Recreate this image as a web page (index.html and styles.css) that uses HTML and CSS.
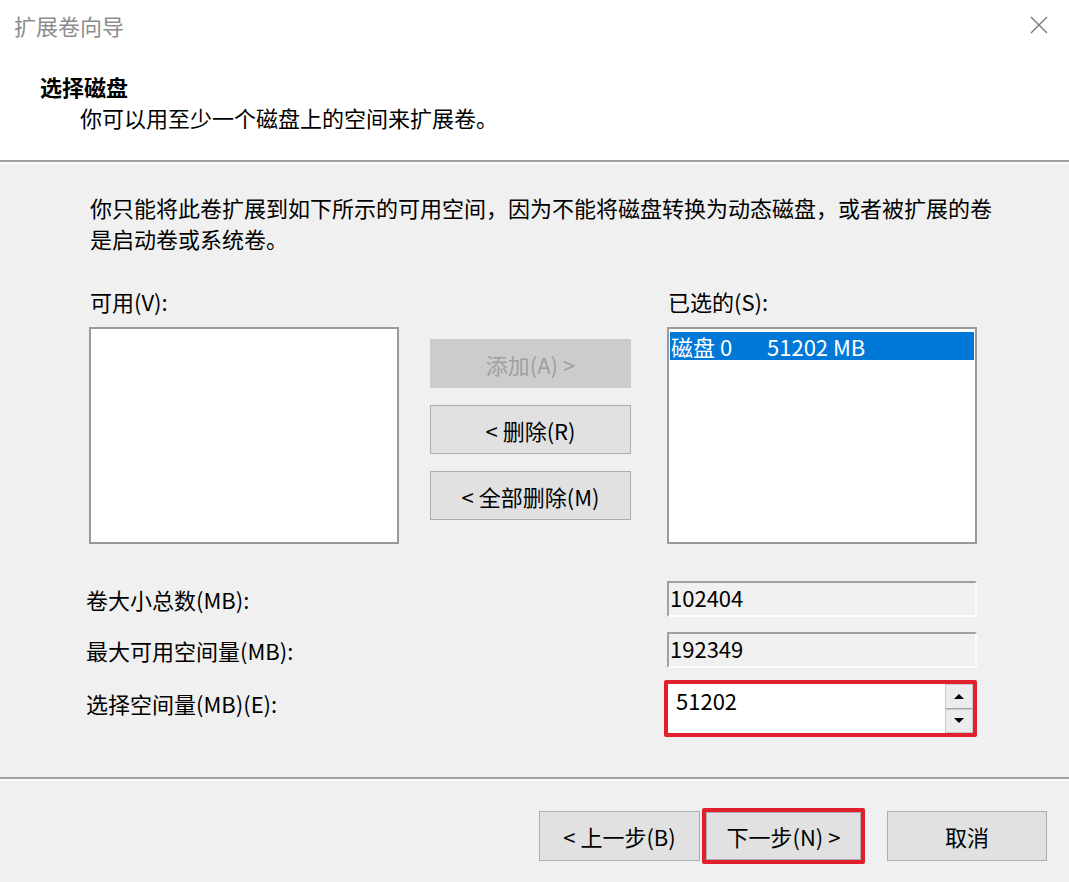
FILE: index.html
```html
<!DOCTYPE html>
<html lang="zh-CN">
<head>
  <meta charset="UTF-8" />
  <title>扩展卷向导</title>
  <link rel="stylesheet" href="styles.css">
</head>
<body>
  <div class="wizard">

    <div class="titlebar">
      <span class="title-text">扩展卷向导</span>
      <svg class="close" width="18" height="18" viewBox="0 0 18 18">
        <path d="M1 1 L17 17 M17 1 L1 17" stroke="#777" stroke-width="1.3" fill="none"/>
      </svg>
    </div>

    <div class="header">
      <div class="header-title">选择磁盘</div>
      <div class="header-sub">你可以用至少一个磁盘上的空间来扩展卷。</div>
    </div>

    <div class="etched"></div>

    <div class="main">
      <p class="intro">你只能将此卷扩展到如下所示的可用空间，因为不能将磁盘转换为动态磁盘，或者被扩展的卷是启动卷或系统卷。</p>

      <div class="lists">
        <div class="list-col">
          <div class="label">可用(V):</div>
          <div class="listbox"></div>
        </div>

        <div class="move-buttons">
          <button class="btn disabled">添加(A) &gt;</button>
          <button class="btn">&lt; 删除(R)</button>
          <button class="btn">&lt; 全部删除(M)</button>
        </div>

        <div class="list-col">
          <div class="label">已选的(S):</div>
          <div class="listbox">
            <div class="item selected"><span class="disk">磁盘 0</span>51202 MB</div>
          </div>
        </div>
      </div>

      <div class="field-row first">
        <div class="field-label">卷大小总数(MB):</div>
        <div class="readonly">102404</div>
      </div>
      <div class="field-row">
        <div class="field-label">最大可用空间量(MB):</div>
        <div class="readonly">192349</div>
      </div>
      <div class="field-row spin-row">
        <div class="field-label">选择空间量(MB)(E):</div>
        <div class="highlight spin-wrap">
          <div class="spin">
            <span class="spin-value">51202</span>
            <div class="spin-arrows">
              <div class="arrow up"><span></span></div>
              <div class="arrow down"><span></span></div>
            </div>
          </div>
        </div>
      </div>
    </div>

    <div class="etched"></div>

    <div class="footer">
      <button class="btn nav">&lt; 上一步(B)</button>
      <div class="highlight next-wrap">
        <button class="btn nav inner">下一步(N) &gt;</button>
      </div>
      <button class="btn nav cancel">取消</button>
    </div>

  </div>
</body>
</html>
```

FILE: styles.css
```css
* {
  box-sizing: border-box;
  margin: 0;
  padding: 0;
}

body {
  font-family: "Noto Sans CJK SC", "Noto Sans", sans-serif;
  font-size: 22px;
  color: #000;
  background-color: #f0f0f0;
  width: 1069px;
  height: 882px;
  overflow: hidden;
}

.wizard {
  width: 1069px;
  height: 882px;
}

/* title bar + header */
.titlebar {
  height: 50px;
  background: white;
  display: flex;
  align-items: center;
  justify-content: space-between;
  padding: 0 21px 0 14px;
}

.title-text {
  color: #8c8c8c;
  line-height: 31px;
}

.close {
  display: block;
}

.header {
  background: white;
  padding: 21px 0 27px 40px;
  height: 110px;
}

.header-title {
  font-weight: 700;
  line-height: 31px;
}

.header-sub {
  line-height: 31px;
  padding-left: 40px;
}

.etched {
  height: 4px;
  border-top: 2px solid #a0a0a0;
  border-bottom: 2px solid #fcfcfc;
}

/* main area */
.main {
  height: 613px;
  padding: 28px 0 0 89px;
}

.intro {
  width: 912px;
  padding-left: 1px;
  line-height: 31px;
}

.lists {
  display: flex;
  margin-top: 32px;
}

.list-col {
  width: 310px;
}

.label {
  line-height: 31px;
  padding-left: 1px;
  margin-bottom: 10px;
}

.listbox {
  height: 217px;
  background: white;
  border: 2px solid #9a9a9e;
  padding: 3px 1px;
}

.item {
  height: 28px;
  line-height: 28px;
  padding-left: 1px;
  white-space: nowrap;
}

.item.selected {
  background: #0078d7;
  color: white;
}

.item .disk {
  display: inline-block;
  width: 96px;
}

.move-buttons {
  width: 201px;
  margin: 53px 36px 0 31px;
  display: flex;
  flex-direction: column;
  gap: 17px;
}

.btn {
  font-family: inherit;
  font-size: 22px;
  color: #000;
  background: #e1e1e1;
  border: 1px solid #adadad;
  height: 49px;
  width: 100%;
  cursor: pointer;
}

.btn.disabled {
  background: #cccccc;
  border-color: #cccccc;
  color: #a0a0a0;
}

/* value rows */
.field-row {
  display: flex;
  align-items: center;
  margin-top: 15px;
  height: 36px;
}

.field-row.first {
  margin-top: 37px;
}

.field-label {
  width: 581px;
  margin-left: -3px;
  padding-right: 3px;
  line-height: 31px;
}

.readonly {
  width: 310px;
  height: 36px;
  line-height: 29px;
  padding-left: 1px;
  border-top: 2px solid #a0a0a0;
  border-left: 2px solid #a0a0a0;
  border-right: 2px solid #fcfcfc;
  border-bottom: 2px solid #fcfcfc;
}

.highlight {
  border: 4px solid #e0202c;
  border-radius: 2px;
}

.field-row.spin-row {
  margin-top: 12px;
  height: 57px;
  align-items: flex-start;
}

.spin-row .field-label {
  margin-top: 8px;
}

.spin-wrap {
  width: 313px;
  height: 57px;
  margin-left: -3px;
}

.spin {
  display: flex;
  height: 100%;
  background: white;
}

.spin-value {
  flex: 1;
  padding-left: 8px;
  line-height: 33px;
}

.spin-arrows {
  width: 28px;
  display: flex;
  flex-direction: column;
}

.arrow {
  flex: 1;
  background: #ececec;
  border: 1px solid #c8c8c8;
  display: flex;
  align-items: center;
  justify-content: center;
}

.arrow.up {
  border-bottom-color: #a8a8a8;
}

.arrow span {
  width: 0;
  height: 0;
  border-left: 5px solid transparent;
  border-right: 5px solid transparent;
}

.arrow.up span {
  border-bottom: 5px solid #000;
}

.arrow.down span {
  border-top: 5px solid #000;
}

/* footer */
.footer {
  display: flex;
  justify-content: flex-end;
  align-items: center;
  padding: 27px 22px 0 0;
  height: 83px;
}

.btn.nav {
  width: 161px;
  height: 50px;
}

.next-wrap {
  margin-left: 2px;
  width: 163px;
  height: 56px;
}

.btn.nav.inner {
  width: 100%;
  height: 100%;
}

.btn.nav.cancel {
  width: 160px;
  margin-left: 22px;
}
```
